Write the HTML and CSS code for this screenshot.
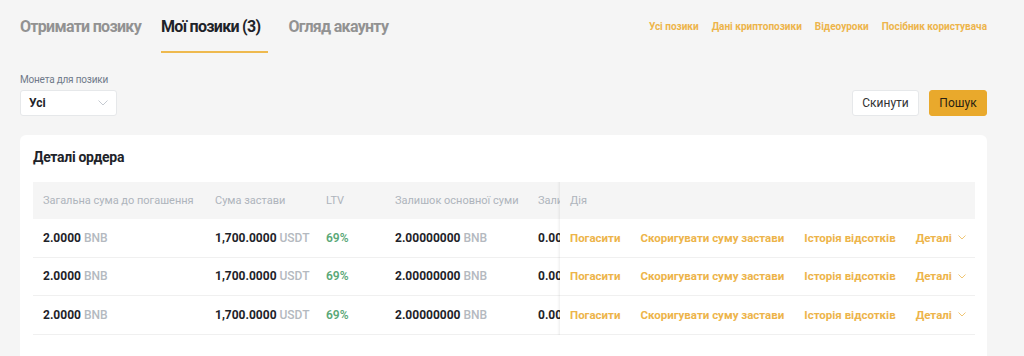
FILE: index.html
```html
<!DOCTYPE html>
<html lang="uk">
<head>
<meta charset="utf-8">
<title>Мої позики</title>
<link rel="stylesheet" href="styles.css">
</head>
<body>
<div class="page">
  <div class="topbar">
    <nav class="tabs">
      <a class="tab">Отримати позику</a>
      <a class="tab active">Мої позики (3)</a>
      <a class="tab">Огляд акаунту</a>
    </nav>
    <nav class="links">
      <a class="link">Усі позики</a>
      <a class="link">Дані криптопозики</a>
      <a class="link">Відеоуроки</a>
      <a class="link">Посібник користувача</a>
    </nav>
  </div>

  <div class="filters">
    <div class="field">
      <div class="field-label">Монета для позики</div>
      <div class="select">
        <span class="select-value">Усі</span>
        <svg class="chev" width="10" height="6" viewBox="0 0 10 6"><path d="M0.5 0.5 L5 5 L9.5 0.5" fill="none" stroke="#c5cad1" stroke-width="1"/></svg>
      </div>
    </div>
    <div class="actions">
      <button class="btn btn-reset">Скинути</button>
      <button class="btn btn-search">Пошук</button>
    </div>
  </div>

  <section class="card">
    <h2 class="card-title">Деталі ордера</h2>
    <div class="table">
      <div class="scroll">
        <div class="row head">
          <div class="cell c1">Загальна сума до погашення</div>
          <div class="cell c2">Сума застави</div>
          <div class="cell c3">LTV</div>
          <div class="cell c4">Залишок основної суми</div>
          <div class="cell c5">Залишок відсотків</div>
        </div>
        <div class="row">
          <div class="cell c1"><b>2.0000</b> <span class="unit">BNB</span></div>
          <div class="cell c2"><b>1,700.0000</b> <span class="unit">USDT</span></div>
          <div class="cell c3 green">69%</div>
          <div class="cell c4"><b>2.00000000</b> <span class="unit">BNB</span></div>
          <div class="cell c5"><b>0.00000000</b> <span class="unit">BNB</span></div>
        </div>
        <div class="row">
          <div class="cell c1"><b>2.0000</b> <span class="unit">BNB</span></div>
          <div class="cell c2"><b>1,700.0000</b> <span class="unit">USDT</span></div>
          <div class="cell c3 green">69%</div>
          <div class="cell c4"><b>2.00000000</b> <span class="unit">BNB</span></div>
          <div class="cell c5"><b>0.00000000</b> <span class="unit">BNB</span></div>
        </div>
        <div class="row">
          <div class="cell c1"><b>2.0000</b> <span class="unit">BNB</span></div>
          <div class="cell c2"><b>1,700.0000</b> <span class="unit">USDT</span></div>
          <div class="cell c3 green">69%</div>
          <div class="cell c4"><b>2.00000000</b> <span class="unit">BNB</span></div>
          <div class="cell c5"><b>0.00000000</b> <span class="unit">BNB</span></div>
        </div>
      </div>
      <div class="fixed">
        <div class="row head"><div class="cell">Дія</div></div>
        <div class="row act">
          <a class="act-link">Погасити</a><a class="act-link">Скоригувати суму застави</a><a class="act-link">Історія відсотків</a><a class="act-link">Деталі <svg class="chev-y" width="8" height="5" viewBox="0 0 8 5"><path d="M0.5 0.5 L4 4 L7.5 0.5" fill="none" stroke="#f0c674" stroke-width="1"/></svg></a>
        </div>
        <div class="row act">
          <a class="act-link">Погасити</a><a class="act-link">Скоригувати суму застави</a><a class="act-link">Історія відсотків</a><a class="act-link">Деталі <svg class="chev-y" width="8" height="5" viewBox="0 0 8 5"><path d="M0.5 0.5 L4 4 L7.5 0.5" fill="none" stroke="#f0c674" stroke-width="1"/></svg></a>
        </div>
        <div class="row act">
          <a class="act-link">Погасити</a><a class="act-link">Скоригувати суму застави</a><a class="act-link">Історія відсотків</a><a class="act-link">Деталі <svg class="chev-y" width="8" height="5" viewBox="0 0 8 5"><path d="M0.5 0.5 L4 4 L7.5 0.5" fill="none" stroke="#f0c674" stroke-width="1"/></svg></a>
        </div>
      </div>
    </div>
  </section>
</div>
</body>
</html>
```

FILE: styles.css
```css
* { box-sizing: border-box; }
html, body { margin: 0; padding: 0; }
body {
  background: #f5f5f5;
  font-family: "Roboto", "Inter", sans-serif;
  color: #1e2329;
  overflow: hidden;
}
.page { padding: 0 37px 0 20px; }

.topbar { display: flex; justify-content: space-between; align-items: flex-start; }
.tabs { display: flex; gap: 20px; }
.tab {
  display: block;
  padding-top: 17px;
  height: 53px;
  font-size: 16px;
  line-height: 20px;
  font-weight: 700;
  letter-spacing: -0.7px;
  color: #929292;
  border-bottom: 2px solid transparent;
}
.tab.active { color: #1e2329; border-bottom-color: #eeb94e; padding-right: 8px; }

.links { display: flex; gap: 13px; padding-top: 20px; }
.link { font-size: 10px; line-height: 14px; font-weight: 700; color: #edb44a; }

.filters { display: flex; justify-content: space-between; align-items: flex-end; margin-top: 20px; }
.field-label { font-size: 10px; line-height: 13px; letter-spacing: -0.2px; color: #707a8a; margin-bottom: 4px; }
.select {
  width: 97px; height: 26px;
  background: #fff;
  border: 1px solid #e6e8ea;
  border-radius: 3px;
  display: flex; align-items: center; justify-content: space-between;
  padding: 0 8px 0 8px;
}
.select-value { font-size: 12px; font-weight: 700; color: #1e2329; }
.actions { display: flex; gap: 10px; }
.btn {
  height: 26px;
  border-radius: 3px;
  font-family: "Roboto", "Liberation Sans", sans-serif;
  font-size: 12px;
  padding: 0;
  cursor: pointer;
}
.btn-reset { width: 67px; background: #fff; border: 1px solid #e6e8ea; color: #333; }
.btn-search { width: 58px; background: #e9a92c; border: 1px solid #e9a92c; color: #2a2212; }

.card {
  margin-top: 19px;
  background: #fff;
  border-radius: 6px;
  padding: 13px 12px 30px 13px;
}
.card-title { margin: 0; font-size: 14px; line-height: 18px; font-weight: 700; letter-spacing: -0.3px; color: #1e2329; }

.table { display: flex; margin-top: 16px; }
.scroll { flex: 1; min-width: 0; overflow: hidden; }
.fixed { width: 415px; flex: none; position: relative; background: #fff; }
.fixed::before {
  content: ""; position: absolute; left: -3px; top: 0; bottom: 0; width: 3px;
  background: linear-gradient(to left, rgba(0,0,0,0.06), rgba(0,0,0,0));
}
.row {
  display: flex; align-items: center;
  height: 38.5px;
  border-bottom: 1px solid #f0f0f0;
  font-size: 12px;
  white-space: nowrap;
}
.row.head { height: 37px; background: #f5f5f5; border-bottom: 0; color: #aeb4bc; font-size: 11px; }
.cell { flex: none; padding-left: 10px; }
.c1 { width: 172px; }
.c2 { width: 111px; }
.c3 { width: 69px; }
.c4 { width: 143px; }
.c5 { width: 150px; }
.row b { font-weight: 700; color: #1e2329; }
.unit { color: #b4b9c0; font-weight: 500; }
.green { color: #5aa878; font-weight: 600; }
.row.act { padding-left: 10px; gap: 20px; font-size: 11.5px; }
.act-link { font-weight: 700; color: #edb44a; display: flex; align-items: center; gap: 6px; }
.chev-y { display: block; }
```
